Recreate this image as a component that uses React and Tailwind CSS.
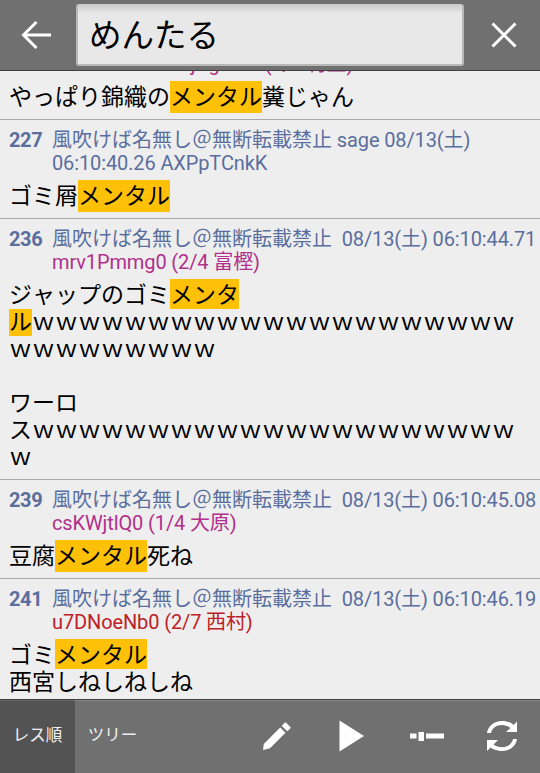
const LATIN = "font-['Roboto','Noto_Sans_CJK_JP',sans-serif]";
const NAME = '風吹けば名無し＠無断転載禁止';
const W = 'ｗ';

const posts = [
  {
    no: '226',
    meta: ' sage 08/13(土)',
    prefix: '06:10:40.10 ',
    id: 'mAjDgoor0 (4/7 村上)',
    color: 'text-[#b0308c]',
    lines: [['やっぱり錦織の', 'メンタル', '糞じゃん']],
  },
  {
    no: '227',
    meta: ' sage 08/13(土)',
    prefix: '06:10:40.26 ',
    id: 'AXPpTCnkK',
    color: 'text-[#5a6e9e]',
    lines: [['ゴミ屑', 'メンタル', '']],
  },
  {
    no: '236',
    meta: '\u00a0 08/13(土) 06:10:44.71',
    prefix: '',
    id: 'mrv1Pmmg0 (2/4 富樫)',
    color: 'text-[#b0308c]',
    lines: [
      ['ジャップのゴミ', 'メンタ', ''],
      ['', 'ル', W.repeat(21)],
      [W.repeat(9), '', ''],
      ['', '', ''],
      ['ワーロ', '', ''],
      ['ス' + W.repeat(21), '', ''],
      [W, '', ''],
    ],
  },
  {
    no: '239',
    meta: '\u00a0 08/13(土) 06:10:45.08',
    prefix: '',
    id: 'csKWjtlQ0 (1/4 大原)',
    color: 'text-[#b0308c]',
    lines: [['豆腐', 'メンタル', '死ね']],
  },
  {
    no: '241',
    meta: '\u00a0 08/13(土) 06:10:46.19',
    prefix: '',
    id: 'u7DNoeNb0 (2/7 西村)',
    color: 'text-[#bd2026]',
    lines: [
      ['ゴミ', 'メンタル', ''],
      ['西宮しねしねしね', '', ''],
    ],
  },
];

function Line({ parts, first, last }) {
  const height = first && last ? 'h-8' : first ? 'h-[30px]' : last ? 'h-[29px]' : 'h-[27px]';
  const leading = first ? 'leading-[33px]' : 'leading-[28px]';
  return (
    <div className={`flex ${height} ${leading}`}>
      <span>{parts[0]}</span>
      {parts[1] && <span className="bg-[#ffc107]">{parts[1]}</span>}
      <span>{parts[2]}</span>
    </div>
  );
}

function Post({ post }) {
  return (
    <article className="border-t border-[#a9a9a9] pt-[9px] pb-1.5">
      <header className="flex pl-[9px] text-[20px] leading-[23px] text-[#5a6e9e]">
        <span className="w-[43px] shrink-0 font-bold tracking-[-0.4px]">{post.no}</span>
        <div>
          <div>
            {NAME}
            <span className="tracking-[-0.12px]">{post.meta}</span>
          </div>
          <div className="tracking-[-0.12px]">
            {post.prefix}
            <span className={post.color}>{post.id}</span>
          </div>
        </div>
      </header>
      <div className="mt-[5px] pl-[9px] text-[23px] text-black [font-kerning:none]">
        {post.lines.map((parts, i) => (
          <Line key={i} parts={parts} first={i === 0} last={i === post.lines.length - 1} />
        ))}
      </div>
    </article>
  );
}

export default function App() {
  return (
    <div className={`flex h-[773px] w-[540px] flex-col overflow-hidden bg-[#eeeeee] whitespace-nowrap ${LATIN}`}>
      <div className="flex h-[71px] shrink-0 border-b border-[#404040] bg-[#707070] pt-1">
        <button className="h-[62px] w-[76px] shrink-0" aria-label="戻る">
          <svg width="76" height="62" viewBox="0 0 76 62" fill="none" stroke="#fff" strokeWidth="3">
            <path d="M51 31H23M36.5 18L23.5 31L36.5 44" />
          </svg>
        </button>
        <div className="h-[62px] w-[388px] rounded-[3px] border-x-2 border-b-2 border-[#b8b8b8] bg-linear-to-b from-[#c8c8c8] via-[#e8e8e8] via-15% to-[#e8e8e8] pl-[11px] text-[32.5px] leading-[65px] text-black">
          めんたる
        </div>
        <button className="h-[62px] w-[76px] shrink-0" aria-label="閉じる">
          <svg width="76" height="62" viewBox="0 0 76 62" fill="none" stroke="#fff" strokeWidth="3">
            <path d="M28.5 19.5L51.500 42.5M51.500 19.5L28.5 42.5" />
          </svg>
        </button>
      </div>

      <main className="h-[628px] shrink-0 overflow-hidden">
        <div className="-mt-[51px]">
          {posts.map((p) => (
            <Post key={p.no} post={p} />
          ))}
        </div>
      </main>

      <nav className="flex h-[74px] shrink-0 border-t border-[#404040] bg-[#707070] text-[16.5px] text-[#f0f0f0]">
        <div className="flex w-[75px] items-center justify-center border-t border-[#666666] bg-[#535353] pb-0.5">レス順</div>
        <div className="flex w-[75px] items-center justify-center border-t border-[#868686] pb-0.5">ツリー</div>
        <svg className="border-t border-[#868686]" width="390" height="73" viewBox="150 701 390 72" fill="#fff">
          <path d="M263 750L263.8 744L280.2 727.5L285.5 732.8L270 748.3ZM281.8 726L284.6 722.8Q285.3 722 286.2 722.8L290.3 727Q291 727.8 290.3 728.5L287.3 731.3Z" />
          <path d="M339.5 720.5L364 736L339.5 751.5Z" />
          <path d="M410 733.5h6.5v5h-6.5zM418.5 732h5.5v9h-5.5zM426 733.5h18v5h-18z" />
          <path d="M487 733C488 726 494 721 502 721C507 721 511 722.6 513.7 725L517 721.5V732H506L510.5 728C508 726 505 725 502 725C496 725 492 728.5 491 733ZM517 739C516 746 510 751 502 751C497.5 751 493.5 749.5 490.5 747.5L487 751V740H498L493.5 744.5C496 746.3 499 747.2 502 747.2C508 747.2 512 743.5 513 739Z" />
        </svg>
      </nav>
    </div>
  );
}
